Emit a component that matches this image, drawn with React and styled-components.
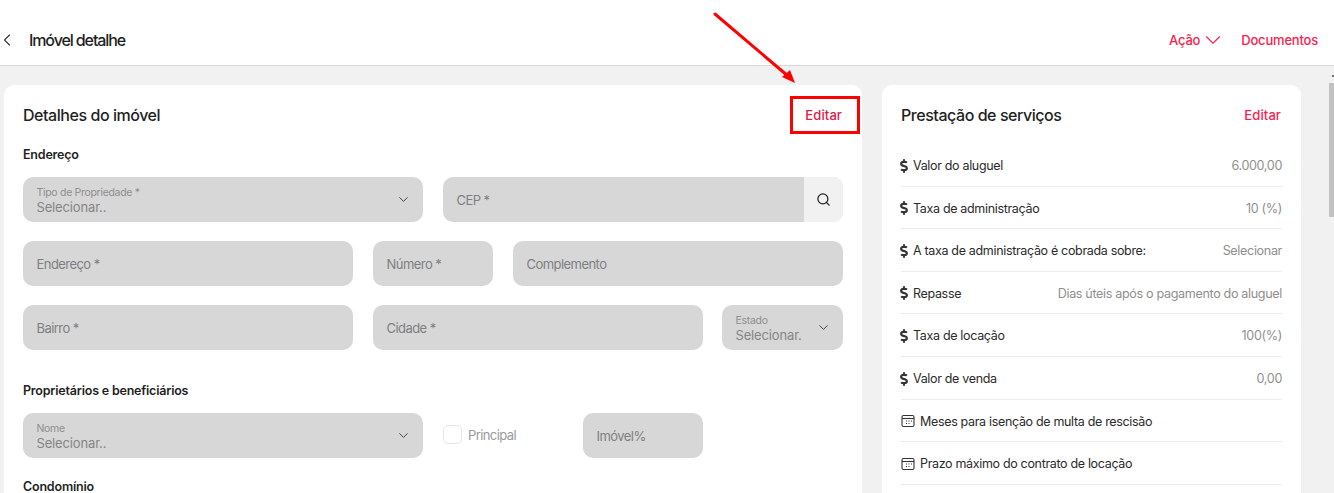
import React from 'react';
import styled, { createGlobalStyle } from 'styled-components';
import { ChevronLeft, ChevronDown, Search } from 'lucide-react';
import { FaDollarSign } from 'react-icons/fa';

const GlobalStyle = createGlobalStyle`
    html, body {
        margin: 0;
        height: 100%;
        overflow: hidden;
    }
    body {
        font-family: "Inter", "Liberation Sans", sans-serif;
        letter-spacing: -0.4px;
        background: #fff;
    }
    * {
        box-sizing: border-box;
    }
`;

const Page = styled.div`
    position: relative;
    width: 1334px;
    height: 493px;
    overflow: hidden;
    display: flex;
    flex-direction: column;
`;

const Header = styled.header`
    flex: none;
    height: 66px;
    padding: 15px 16px 0 0;
    display: flex;
    align-items: center;
    background: #fff;
    border-bottom: 1px solid #d9d9d9;
`;

const BackButton = styled.div`
    width: 29px;
    display: flex;
    color: #333;

    svg {
        flex: none;
        margin-left: -3.5px;
    }
`;

const PageTitle = styled.div`
    flex: 1;
    font-size: 16px;
    font-weight: 500;
    letter-spacing: -1.1px;
    color: #1f1f1f;
`;

const HeaderAction = styled.div`
    display: flex;
    align-items: center;
    margin-left: ${(p) => p.$gap || 0}px;
    font-size: 13px;
    font-weight: 500;
    letter-spacing: -0.2px;
    color: #f9234f;
`;

const Content = styled.div`
    flex: 1;
    display: flex;
    background: #f1f1f1;
    min-height: 0;
`;

const Columns = styled.div`
    flex: 1;
    padding: 19px 0 0 4px;
    display: flex;
    align-items: flex-start;
    gap: 20px;
`;

const Card = styled.section`
    width: ${(p) => p.$width}px;
    height: 500px;
    padding: 19px;
    border-radius: 10px;
    background: #fff;
`;

const CardHead = styled.div`
    height: 22px;
    display: flex;
    align-items: center;
    justify-content: space-between;
`;

const CardTitle = styled.h2`
    margin: 0;
    font-size: 16px;
    font-weight: 500;
    letter-spacing: -0.45px;
    color: #1f1f1f;
`;

const EditLink = styled.span`
    font-size: 13px;
    font-weight: 500;
    letter-spacing: 0.1px;
    color: ${(p) => p.$dark ? '#d9204a' : '#f9234f'};
    margin-right: 1px;
`;

const SectionTitle = styled.h3`
    margin: ${(p) => p.$top}px 0 ${(p) => p.$bottom}px;
    height: 18px;
    line-height: 18px;
    font-size: 12.5px;
    font-weight: 600;
    letter-spacing: -0.2px;
    color: #1f1f1f;
`;

const FormGrid = styled.div`
    display: grid;
    grid-template-columns: repeat(12, 50px);
    column-gap: 20px;
    row-gap: 19px;
`;

const Field = styled.div`
    grid-column: span ${(p) => p.$span};
    height: 45px;
    margin-left: ${(p) => p.$bleed || 0}px;
    padding: 0 12px 0 13.5px;
    display: flex;
    align-items: center;
    border-radius: 10px;
    background: #d7d7d7;
    font-size: 13px;
    letter-spacing: -0.55px;
    color: #7d7f83;
    overflow: hidden;
`;

const SelectText = styled.div`
    flex: 1;
    display: flex;
    flex-direction: column;
    min-width: 0;
    padding-top: 2px;
    white-space: nowrap;
`;

const SelectLabel = styled.span`
    font-size: 10.5px;
    line-height: 13px;
    letter-spacing: -0.3px;
    color: #8e8e8e;
`;

const SelectValue = styled.span`
    font-size: 13px;
    line-height: 17px;
    letter-spacing: -0.15px;
    color: #858585;
`;

const Chevron = styled(ChevronDown)`
    flex: none;
    color: #444;
`;

const SearchField = styled(Field)`
    padding: 0 0 0 13.5px;
`;

const FieldLabel = styled.span`
    flex: 1;
`;

const SearchButton = styled.div`
    flex: none;
    width: 39px;
    height: 100%;
    display: flex;
    align-items: center;
    justify-content: center;
    background: #f1f1f1;
    color: #222;
`;

const CheckField = styled.div`
    grid-column: span 2;
    display: flex;
    align-items: center;
    gap: 6px;
    padding-bottom: 2px;
    font-size: 13px;
    letter-spacing: -0.6px;
    color: #9a9a9a;
`;

const CheckBox = styled.span`
    width: 19px;
    height: 19px;
    border: 1px solid #e6e6e6;
    border-radius: 5px;
`;

const InfoList = styled.div`
    margin-top: 18px;
    display: flex;
    flex-direction: column;
`;

const InfoRow = styled.div`
    height: 42.6px;
    padding-top: 1.5px;
    display: flex;
    align-items: center;
    border-bottom: 1px solid #ececec;
    font-size: 12.5px;
    letter-spacing: -0.33px;
`;

const InfoIcon = styled.span`
    flex: none;
    width: ${(p) => p.$width}px;
    margin-left: ${(p) => p.$shift || 0}px;
    display: flex;
    color: #333;
`;

const DollarIcon = styled(FaDollarSign)`
    width: 8px;
    height: 14px;
`;

const InfoLabel = styled.span`
    flex: 1;
    color: #2b2b2b;
    white-space: nowrap;
`;

const InfoValue = styled.span`
    font-size: 12.6px;
    letter-spacing: -0.35px;
    color: #8f8f8f;
    white-space: nowrap;
`;

const ScrollTrack = styled.div`
    position: relative;
    flex: none;
    width: 5px;
    margin-top: 17px;
    background: #f1f1f1;

    &::before {
        content: "";
        position: absolute;
        top: -8px;
        right: 0;
        width: 2px;
        height: 2px;
        background: #777;
    }
`;

const ScrollThumb = styled.div`
    height: 134px;
    background: #c1c1c1;
`;

// red marking drawn over the screenshot
const HighlightBox = styled.div`
    position: absolute;
    left: 790px;
    top: 96px;
    width: 70px;
    height: 38px;
    border: 3px solid #ff0000;
`;

const ArrowMark = styled.svg`
    position: absolute;
    left: 705px;
    top: 5px;
`;

const CalendarIcon = () => (
    <svg width="14" height="14" viewBox="0 0 14 14" fill="none" stroke="#333" strokeWidth="1.1">
        <rect x="1" y="1.5" width="12" height="11" rx="1.5" />
        <path d="M1 4.5h12" />
        <path d="M5 7h1M7.5 7h1M10 7h1M5 9.5h1M7.5 9.5h1" />
    </svg>
);

const services = [
    { label: 'Valor do aluguel', value: '6.000,00' },
    { label: 'Taxa de administração', value: '10 (%)' },
    { label: 'A taxa de administração é cobrada sobre:', value: 'Selecionar' },
    { label: 'Repasse', value: 'Dias úteis após o pagamento do aluguel' },
    { label: 'Taxa de locação', value: '100(%)' },
    { label: 'Valor de venda', value: '0,00' },
    { label: 'Meses para isenção de multa de rescisão', calendar: true },
    { label: 'Prazo máximo do contrato de locação', calendar: true },
];

const Select = ({ span, bleed, label, value }) => (
    <Field $span={span} $bleed={bleed}>
        <SelectText>
            <SelectLabel>{label}</SelectLabel>
            <SelectValue>{value}</SelectValue>
        </SelectText>
        <Chevron size={15} strokeWidth={1.6} />
    </Field>
);

export default function App() {
    return (
        <Page>
            <GlobalStyle />
            <Header>
                <BackButton>
                    <ChevronLeft size={20} strokeWidth={1.3} />
                </BackButton>
                <PageTitle>Imóvel detalhe</PageTitle>
                <HeaderAction>
                    Ação
                    <ChevronDown size={26} strokeWidth={1} />
                </HeaderAction>
                <HeaderAction $gap={15}>Documentos</HeaderAction>
            </Header>
            <Content>
                <Columns>
                    <Card $width={858}>
                        <CardHead>
                            <CardTitle>Detalhes do imóvel</CardTitle>
                            <EditLink $dark>Editar</EditLink>
                        </CardHead>
                        <SectionTitle $top={20} $bottom={13}>Endereço</SectionTitle>
                        <FormGrid>
                            <Select span={6} label="Tipo de Propriedade *" value="Selecionar.." />
                            <SearchField $span={6}>
                                <FieldLabel>CEP *</FieldLabel>
                                <SearchButton>
                                    <Search size={15} strokeWidth={2} />
                                </SearchButton>
                            </SearchField>
                            <Field $span={5}>Endereço *</Field>
                            <Field $span={2}>Número *</Field>
                            <Field $span={5}>Complemento</Field>
                            <Field $span={5}>Bairro *</Field>
                            <Field $span={5}>Cidade *</Field>
                            <Select span={2} bleed={-1} label="Estado" value="Selecionar." />
                        </FormGrid>
                        <SectionTitle $top={32} $bottom={13}>Proprietários e beneficiários</SectionTitle>
                        <FormGrid>
                            <Select span={6} label="Nome" value="Selecionar.." />
                            <CheckField>
                                <CheckBox />
                                Principal
                            </CheckField>
                            <Field $span={2}>Imóvel%</Field>
                        </FormGrid>
                        <SectionTitle $top={20} $bottom={13}>Condomínio</SectionTitle>
                    </Card>
                    <Card $width={419}>
                        <CardHead>
                            <CardTitle>Prestação de serviços</CardTitle>
                            <EditLink>Editar</EditLink>
                        </CardHead>
                        <InfoList>
                            {services.map((item) => (
                                <InfoRow key={item.label}>
                                    {item.calendar ? (
                                        <InfoIcon $width={19}><CalendarIcon /></InfoIcon>
                                    ) : (
                                        <InfoIcon $width={13} $shift={-1}><DollarIcon /></InfoIcon>
                                    )}
                                    <InfoLabel>{item.label}</InfoLabel>
                                    {item.value && <InfoValue>{item.value}</InfoValue>}
                                </InfoRow>
                            ))}
                        </InfoList>
                    </Card>
                </Columns>
                <ScrollTrack>
                    <ScrollThumb />
                </ScrollTrack>
            </Content>
            <HighlightBox />
            <ArrowMark width="100" height="85" viewBox="0 0 100 85">
                <path d="M10 9 L83 71" stroke="#ff0000" strokeWidth="3" strokeLinecap="round" />
                <path d="M90 78 L77 72 L85 65 Z" fill="#ff0000" />
            </ArrowMark>
        </Page>
    );
}
